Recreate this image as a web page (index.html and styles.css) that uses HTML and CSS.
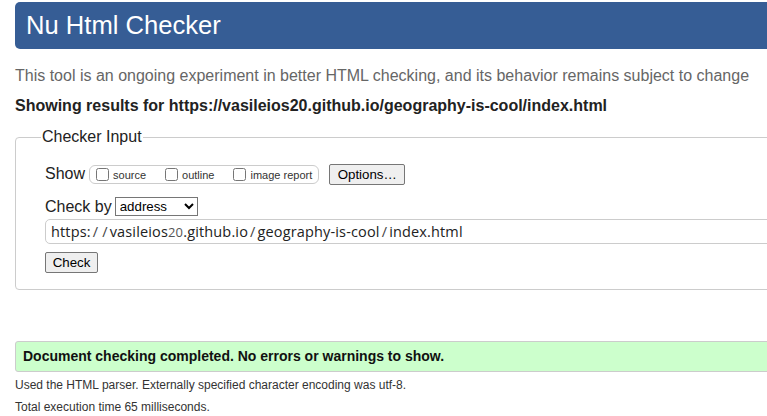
FILE: index.html
```html
<!DOCTYPE html>
<html>
<head>
<meta charset="utf-8">
<title>Nu Html Checker</title>
<link rel="stylesheet" href="styles.css">
</head>
<body>
<div class="page">
  <h1 class="title">Nu Html Checker</h1>
  <p class="about">This tool is an ongoing experiment in better HTML checking, and its behavior remains subject to change</p>
  <p class="showing">Showing results for https://vasileios20.github.io/geography-is-cool/index.html</p>
  <fieldset class="input-box">
    <legend class="legend">Checker Input</legend>
    <div class="row show-row">
      <span class="row-label">Show</span>
      <span class="pill">
        <label class="opt"><input type="checkbox" class="cb">source</label>
        <label class="opt"><input type="checkbox" class="cb">outline</label>
        <label class="opt"><input type="checkbox" class="cb">image report</label>
      </span>
      <button class="btn options">Options…</button>
    </div>
    <div class="row by-row">
      <span class="row-label">Check by</span>
      <select class="sel"><option>address</option></select>
    </div>
    <div class="url">https:<span class="sl">/</span><span class="sl">/</span>vasileios<span class="num">20</span>.github.io<span class="sl">/</span>geography-is-cool<span class="sl">/</span>index.html</div>
    <button class="btn check">Check</button>
  </fieldset>
  <div class="success">Document checking completed. No errors or warnings to show.</div>
  <p class="details">Used the HTML parser. Externally specified character encoding was utf-8.</p>
  <p class="details second">Total execution time 65 milliseconds.</p>
</div>
</body>
</html>
```

FILE: styles.css
```css
html, body {
  margin: 0;
  padding: 0;
  overflow: hidden;
  background: #fff;
}
body {
  font-family: "Liberation Sans", Arial, sans-serif;
  color: #222;
}
.page {
  width: 790px;
  padding: 2px 0 0 15px;
}
.title {
  margin: 0;
  background: #365d95;
  color: #fff;
  font-weight: normal;
  font-size: 25.6px;
  line-height: 47px;
  height: 47px;
  padding-left: 11px;
  border-radius: 5px;
}
.about {
  margin: 18px 0 0;
  font-size: 16px;
  line-height: 18px;
  color: #666;
}
.showing {
  margin: 12px 0 0;
  font-size: 16px;
  line-height: 18px;
  font-weight: bold;
  color: #222;
}
.input-box {
  margin: 13px 0 0;
  border: 1px solid #ccc;
  border-radius: 4px;
  padding: 17px 0 16px 29px;
}
.legend {
  font-size: 16px;
  padding: 0 1px;
  margin-left: -4px;
  color: #222;
}
.row {
  display: flex;
  align-items: center;
}
.row-label {
  font-size: 16px;
  color: #222;
}
.show-row {
  height: 22px;
}
.pill {
  display: flex;
  align-items: center;
  margin-left: 4px;
  height: 17px;
  border: 1px solid #ccc;
  border-radius: 6px;
  padding: 0 6px 0 3px;
  gap: 16px;
}
.opt {
  display: flex;
  align-items: center;
  font-size: 11px;
  color: #333;
  padding-top: 2px;
}
.cb {
  margin: -2px 4px 0 3px;
  width: 13px;
  height: 13px;
}
.btn {
  font-family: "Liberation Sans", Arial, sans-serif;
  font-size: 13.3px;
  background: #efefef;
  border: 1px solid #767676;
  border-radius: 2px;
  color: #000;
  padding: 1px 6px;
}
.options {
  margin-left: 10px;
  height: 21px;
  width: 76px;
  padding: 0;
}
.by-row {
  margin-top: 12px;
}
.sel {
  margin-left: 3px;
  height: 19px;
  width: 83px;
  font-family: "Liberation Sans", Arial, sans-serif;
  font-size: 13.3px;
  border: 1px solid #767676;
  border-radius: 0;
  background: #fff;
  color: #000;
}
.url {
  margin-top: 3px;
  height: 23px;
  border: 1px solid #ccc;
  border-radius: 5px;
  font-family: "Open Sans", "DejaVu Sans", sans-serif;
  font-size: 14.5px;
  line-height: 23px;
  padding-left: 5px;
  color: #222;
  letter-spacing: 0.15px;
}
.sl {
  display: inline-block;
  padding: 0 2px;
  color: #444;
}
.num {
  font-size: 13px;
  color: #555;
}
.check {
  display: block;
  margin-top: 8px;
  height: 21px;
  width: 53px;
  padding: 0;
}
.success {
  margin-top: 51px;
  height: 29px;
  line-height: 29px;
  background: #ccffcc;
  border: 1px solid #ccc;
  border-radius: 3px;
  padding-left: 7px;
  font-weight: bold;
  font-size: 14px;
  color: #111;
}
.details {
  margin: 2px 0 0;
  font-size: 12px;
  line-height: 22px;
  color: #333;
}
.second {
  margin-top: 0;
}
```
